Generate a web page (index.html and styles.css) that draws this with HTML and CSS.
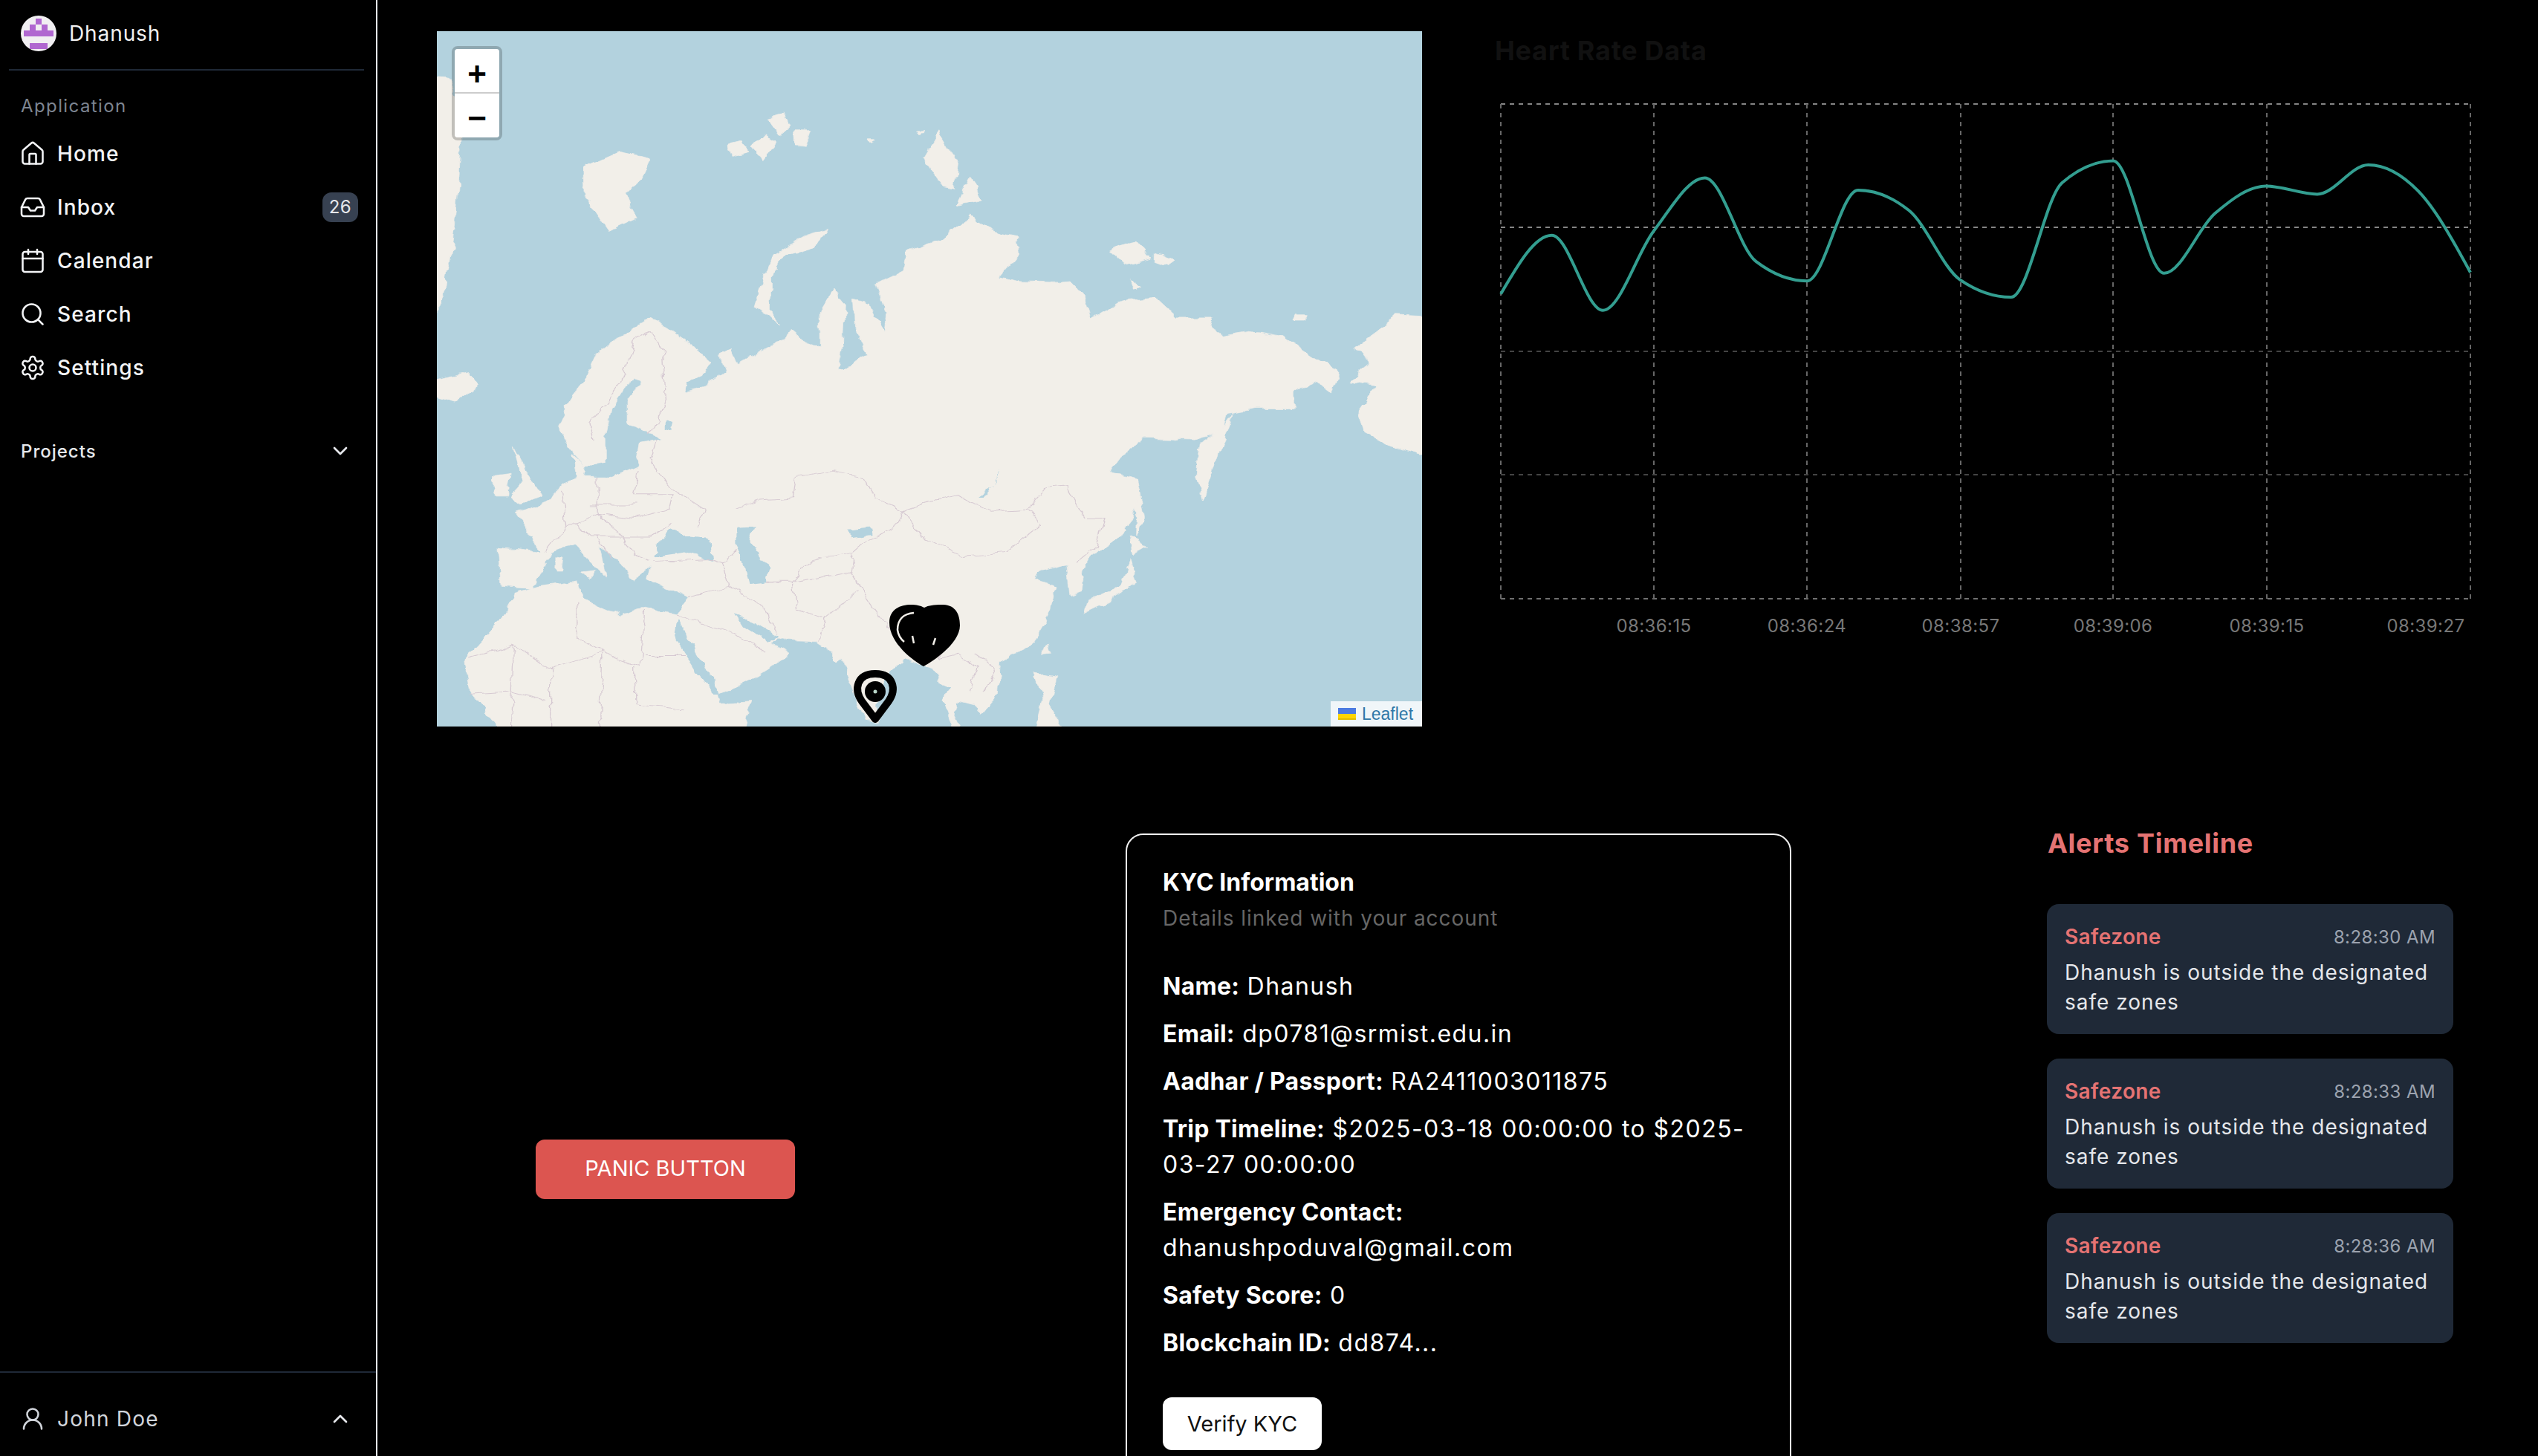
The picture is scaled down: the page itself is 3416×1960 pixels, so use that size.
FILE: index.html
```html
<!DOCTYPE html>
<html lang="en">
<head>
    <meta charset="UTF-8">
    <meta name="viewport" content="width=device-width, initial-scale=1.0">
    <title>Dashboard</title>
    <link rel="stylesheet" href="styles.css">
</head>
<body>
    <div class="sidebar">
        <div class="brand">
            <svg class="avatar" viewBox="0 0 48 48">
                <circle cx="24" cy="24" r="24" fill="#f1eff2"/>
                <path d="M20 4h8v8h8v8h8v8H4v-8h8v-8h8z" fill="#b067d0"/>
                <rect x="20" y="12" width="8" height="8" fill="#f1eff2"/>
                <rect x="12" y="37" width="24" height="8" fill="#b067d0"/>
            </svg>
            <span>Dhanush</span>
        </div>

        <div class="nav-label">Application</div>
        <a class="nav-item">
            <svg class="icon" viewBox="0 0 24 24"><path d="M15 21v-8a1 1 0 0 0-1-1h-4a1 1 0 0 0-1 1v8"/><path d="M3 10a2 2 0 0 1 .709-1.528l7-5.999a2 2 0 0 1 2.582 0l7 5.999A2 2 0 0 1 21 10v9a2 2 0 0 1-2 2H5a2 2 0 0 1-2-2z"/></svg>
            <span>Home</span>
        </a>
        <a class="nav-item">
            <svg class="icon" viewBox="0 0 24 24"><polyline points="22 12 16 12 14 15 10 15 8 12 2 12"/><path d="M5.45 5.11 2 12v6a2 2 0 0 0 2 2h16a2 2 0 0 0 2-2v-6l-3.45-6.89A2 2 0 0 0 16.76 4H7.24a2 2 0 0 0-1.79 1.11z"/></svg>
            <span>Inbox</span>
            <span class="badge">26</span>
        </a>
        <a class="nav-item">
            <svg class="icon" viewBox="0 0 24 24"><path d="M8 2v4"/><path d="M16 2v4"/><rect width="18" height="18" x="3" y="4" rx="2"/><path d="M3 10h18"/></svg>
            <span>Calendar</span>
        </a>
        <a class="nav-item">
            <svg class="icon" viewBox="0 0 24 24"><circle cx="11" cy="11" r="8"/><path d="m21 21-4.3-4.3"/></svg>
            <span>Search</span>
        </a>
        <a class="nav-item">
            <svg class="icon" viewBox="0 0 24 24"><path d="M12.22 2h-.44a2 2 0 0 0-2 2v.18a2 2 0 0 1-1 1.73l-.43.25a2 2 0 0 1-2 0l-.15-.08a2 2 0 0 0-2.73.73l-.22.38a2 2 0 0 0 .73 2.73l.15.1a2 2 0 0 1 1 1.72v.51a2 2 0 0 1-1 1.74l-.15.09a2 2 0 0 0-.73 2.73l.22.38a2 2 0 0 0 2.73.73l.15-.08a2 2 0 0 1 2 0l.43.25a2 2 0 0 1 1 1.73V20a2 2 0 0 0 2 2h.44a2 2 0 0 0 2-2v-.18a2 2 0 0 1 1-1.73l.43-.25a2 2 0 0 1 2 0l.15.08a2 2 0 0 0 2.73-.73l.22-.39a2 2 0 0 0-.73-2.73l-.15-.08a2 2 0 0 1-1-1.74v-.5a2 2 0 0 1 1-1.74l.15-.09a2 2 0 0 0 .73-2.73l-.22-.38a2 2 0 0 0-2.73-.73l-.15.08a2 2 0 0 1-2 0l-.43-.25a2 2 0 0 1-1-1.73V4a2 2 0 0 0-2-2z"/><circle cx="12" cy="12" r="3"/></svg>
            <span>Settings</span>
        </a>

        <div class="projects">
            <span>Projects</span>
            <svg class="chevron" viewBox="0 0 24 24"><path d="m6 9 6 6 6-6"/></svg>
        </div>

        <div class="user-row">
            <svg class="icon" viewBox="0 0 24 24"><circle cx="12" cy="8" r="5"/><path d="M20 21a8 8 0 0 0-16 0"/></svg>
            <span>John Doe</span>
            <svg class="chevron" viewBox="0 0 24 24"><path d="m18 15-6-6-6 6"/></svg>
        </div>
    </div>

    <div class="main">
        <div class="top-row">
            <div class="map">
                <svg class="map-base" viewBox="9 20 1552 1528" preserveAspectRatio="none">
                    <defs>
                        <!-- roughens the traced coastlines -->
                        <filter id="coast" filterUnits="userSpaceOnUse" x="-20" y="-20" width="1620" height="1620">
                            <feTurbulence type="fractalNoise" baseFrequency="0.035" numOctaves="3" seed="4"/>
                            <feDisplacementMap in="SourceGraphic" scale="16" xChannelSelector="R" yChannelSelector="G"/>
                        </filter>
                    </defs>
                    <g class="geo">
                    <g class="land">
                        <!-- eurasia and africa -->
                        <polygon points="200,890 215,845 240,790 258,735 300,690 345,650 372,672 415,715 442,748 428,775 405,790 402,812 432,800 462,770 455,728 472,718 482,752 530,712 560,700 565,672 588,700 612,715 612,640 635,585 652,615 650,700 640,765 660,760 685,730 668,680 665,610 690,620 715,680 718,640 702,575 745,545 750,505 800,480 850,425 880,455 920,470 925,510 895,560 930,570 990,572 1010,570 1030,600 1040,655 1095,610 1140,605 1175,650 1225,650 1245,690 1290,680 1340,690 1395,740 1430,770 1420,815 1395,790 1360,810 1360,850 1300,850 1255,860 1248,900 1205,918 1120,915 1090,950 1068,990 1112,1005 1115,1060 1090,1125 1060,1150 1030,1190 1025,1250 1005,1260 1000,1190 960,1205 952,1225 985,1240 975,1300 945,1370 897,1404 893,1475 866,1521 854,1497 835,1490 827,1497 823,1518 840,1570 825,1570 805,1490 815,1464 803,1453 792,1420 776,1412 745,1401 725,1426 702,1480 702,1540 682,1529 655,1431 649,1399 640,1407 624,1374 608,1360 560,1358 545,1350 535,1365 565,1385 535,1420 505,1445 452,1478 455,1495 505,1490 490,1570 118,1570 60,1470 52,1400 105,1320 130,1255 170,1240 230,1228 240,1270 300,1305 335,1285 385,1300 405,1262 340,1225 345,1195 320,1230 300,1190 265,1150 275,1220 225,1150 190,1165 160,1245 110,1240 105,1155 175,1165 135,1080 190,1050 205,1015 230,1000 225,950 245,975 240,1000 285,1000 325,975 330,925 365,915 335,895 310,885 310,830 330,790 315,785 285,850 275,920 275,970 245,975 225,945"/>
                        <!-- islands -->
                        <polygon points="130,930 150,985 175,1040 140,1060 125,1040 145,1010"/>
                        <polygon points="100,995 125,990 120,1040 98,1040"/>
                        <polygon points="-10,790 60,770 75,800 40,835 -10,815"/>
                        <polygon points="238,320 295,285 345,300 330,345 305,380 325,430 280,460 240,380"/>
                        <polygon points="468,270 490,262 498,285 475,295"/>
                        <polygon points="505,275 525,245 545,265 525,305"/>
                        <polygon points="530,215 558,198 568,225 548,250"/>
                        <polygon points="570,240 600,240 590,270 572,268"/>
                        <polygon points="688,258 700,258 695,268"/>
                        <polygon points="768,240 778,240 772,250"/>
                        <polygon points="775,300 800,240 830,310 825,365 805,360"/>
                        <polygon points="828,405 850,340 868,390"/>
                        <polygon points="625,455 610,490 560,510 535,560 535,640 550,665 510,625 520,580 540,510 590,470"/>
                        <polygon points="1070,500 1110,480 1135,520 1095,535"/>
                        <polygon points="1140,510 1170,525 1160,535 1140,525"/>
                        <polygon points="1100,565 1120,585 1105,590"/>
                        <polygon points="1360,640 1380,640 1375,655 1355,655"/>
                        <polygon points="1250,890 1265,860 1240,950 1215,1050 1205,1000 1210,930"/>
                        <polygon points="1112,1005 1125,1090 1110,1130"/>
                        <polygon points="1100,1130 1130,1150 1105,1170"/>
                        <polygon points="1100,1180 1110,1230 1060,1280 1030,1300 1035,1270 1085,1240"/>
                        <polygon points="1590,650 1520,645 1490,680 1455,715 1480,750 1445,790 1490,800 1460,860 1470,900 1510,930 1590,960"/>
                        <polygon points="-10,120 30,130 50,220 45,340 35,480 20,600 -10,700"/>
                        <polygon points="970,1365 975,1390 965,1392"/>
                        <polygon points="950,1430 985,1440 975,1500 1005,1570 950,1570 965,1490"/>
                        <polygon points="195,1175 208,1178 205,1205 195,1205"/>
                        <polygon points="232,1212 258,1208 250,1225"/>
                    </g>
                    <g class="water">
                        <polygon points="355,1150 375,1115 400,1130 440,1135 445,1185 400,1165 350,1175"/>
                        <polygon points="480,1110 510,1108 500,1140 530,1200 530,1230 500,1235 490,1180 480,1150"/>
                        <polygon points="478,1300 505,1320 545,1348 530,1362 505,1338 490,1325"/>
                        <polygon points="385,1310 400,1340 432,1420 455,1478 445,1478 415,1420 382,1345"/>
                        <polygon points="860,1045 885,1020 898,980 890,1010 870,1045"/>
                        <polygon points="655,1115 690,1110 692,1125 660,1132"/>
                        <polygon points="368,875 382,880 378,900 368,895"/>
                    </g>
                    <g class="borders">
                        <polyline points="480,1070 520,1050 570,1045 575,1000 630,985 680,1000 700,1045 745,1075 730,1110 690,1135 665,1165 660,1210"/>
                        <polyline points="745,1075 780,1055 830,1040 880,1075 940,1070 960,1105 905,1165 840,1175 770,1130 745,1075"/>
                        <polyline points="940,1070 970,1020 1000,1015 1030,1090 1060,1090 1050,1150 1015,1190"/>
                        <polyline points="660,1210 680,1250 720,1330 776,1345 800,1400 830,1390 860,1420 850,1470"/>
                        <polyline points="855,1385 890,1420 870,1470"/>
                        <polyline points="660,1210 570,1230 575,1290 620,1310 610,1360"/>
                        <polyline points="620,1310 672,1250"/>
                        <polyline points="460,1190 470,1240 530,1290 545,1345"/>
                        <polyline points="480,1160 460,1190 440,1180 350,1185"/>
                        <polyline points="530,1230 570,1230 600,1180 665,1165"/>
                        <polyline points="385,1300 470,1340 530,1385"/>
                        <polyline points="405,1262 470,1240"/>
                        <polyline points="60,1395 130,1370 190,1420 270,1385 330,1415 335,1290"/>
                        <polyline points="230,1280 230,1350 270,1385 265,1570"/>
                        <polyline points="130,1370 125,1570"/>
                        <polyline points="190,1420 190,1570"/>
                        <polyline points="335,1392 410,1392"/>
                        <polyline points="320,1415 320,1500 400,1510"/>
                        <polyline points="60,1475 120,1470 180,1490"/>
                        <polyline points="345,680 320,700 300,790 250,880 255,920"/>
                        <polyline points="345,680 365,720 370,830 345,905"/>
                        <polyline points="355,915 345,960 375,1020 430,1070 420,1110"/>
                        <polyline points="262,1000 262,1080 320,1090 375,1070 380,1040 320,1040 325,985"/>
                        <polyline points="180,1165 210,1110 205,1030"/>
                        <polyline points="210,1110 262,1080 300,1130 345,1130 380,1100"/>
                        <polyline points="225,1100 250,1130 300,1130 320,1170 345,1185"/>
                        <polyline points="262,1130 285,1180"/>
                        <polyline points="250,1060 320,1060"/>
                    </g>
                    </g>
                </svg>

                <!-- the three pins at their places on the map -->
                <svg class="pins" viewBox="588 42 1326 936">
                    <path class="pin-blob" d="M1243 897 C1230 890 1197 866 1197 838 C1197 820 1212 814 1226 814 C1234 814 1238 815 1244 818 C1250 815 1256 814 1268 814 C1284 814 1292 824 1292 842 C1292 866 1256 890 1243 897 Z"/>
                    <path class="pin-gap" d="M1230 825 C1216 826 1208 834 1208 848 C1209 855 1212 860 1217 864"/>
                    <path class="pin-gap" d="M1259 859 L1256 868 M1228 856 L1230 866"/>
                    <path class="pin-line" d="M1178 968 L1160 944 C1149 928 1153 907 1178 907 C1203 907 1207 928 1196 944 Z"/>
                    <circle class="pin-dot" cx="1178" cy="931" r="14"/>
                    <circle class="pin-center" cx="1178" cy="931" r="2.5"/>
                </svg>

                <div class="zoom-control">
                    <a class="zoom-btn">+</a>
                    <a class="zoom-btn">−</a>
                </div>
                <div class="attribution">
                    <svg class="flag" viewBox="0 0 24 16"><rect width="24" height="8" fill="#4c7be1"/><rect y="8" width="24" height="6" fill="#ffd500"/><rect y="14" width="24" height="2" fill="#e0bc00"/></svg>
                    <span>Leaflet</span>
                </div>
            </div>

            <div class="chart-section">
                <h2>Heart Rate Data</h2>
                <svg class="chart" viewBox="2000 120 1376 760">
                    <g class="grid">
                        <path d="M2020 140H3325M2020 306H3325"/>
                        <path class="grid-low" d="M2020 473H3325M2020 639H3325"/>
                        <path class="grid-end" d="M2020 806H3325"/>
                        <path class="grid-v" d="M2020 140V806M2226 140V806M2432 140V806M2639 140V806M2844 140V806M3051 140V806M3325 140V806"/>
                    </g>
                    <path class="hr-line" d="M2020 395.8C2042.9 356.3 2065.8 316.8 2088.7 316.8C2111.6 316.8 2134.5 417.7 2157.4 417.7C2180.3 417.7 2203.1 340.4 2226 310.7C2248.9 281 2271.8 239.4 2294.7 239.4C2317.6 239.4 2340.5 334.4 2363.4 351.9C2386.3 369.4 2409.2 378.2 2432.1 378.2C2455 378.2 2477.9 255.9 2500.8 255.9C2523.7 255.9 2546.5 265 2569.4 283.3C2592.3 301.6 2615.2 360.9 2638.1 376.6C2661 392.3 2683.9 400.1 2706.8 400.1C2729.7 400.1 2752.6 265.7 2775.5 246C2798.4 226.3 2821.3 216.4 2844.2 216.4C2867.1 216.4 2889.9 367.8 2912.8 367.8C2935.7 367.8 2958.6 306.7 2981.5 287.1C3004.4 267.5 3027.3 250.4 3050.2 250.4C3073.1 250.4 3096 261.4 3118.9 261.4C3141.8 261.4 3164.7 221.9 3187.6 221.9C3210.5 221.9 3233.3 234.5 3256.2 258.6C3279.1 282.7 3302.1 324.7 3325 366.7"/>
                    <g class="ticks">
                        <text x="2226" y="851">08:36:15</text>
                        <text x="2432" y="851">08:36:24</text>
                        <text x="2639" y="851">08:38:57</text>
                        <text x="2844" y="851">08:39:06</text>
                        <text x="3051" y="851">08:39:15</text>
                        <text x="3265" y="851">08:39:27</text>
                    </g>
                </svg>
            </div>
        </div>

        <div class="bottom-row">
            <div class="panic-col">
                <button class="panic">PANIC BUTTON</button>
            </div>

            <div class="kyc-card">
                <h3>KYC Information</h3>
                <p class="kyc-sub">Details linked with your account</p>
                <div class="kyc-rows">
                    <p><b>Name:</b> Dhanush</p>
                    <p><b>Email:</b> dp0781@srmist.edu.in</p>
                    <p><b>Aadhar / Passport:</b> RA2411003011875</p>
                    <p><b>Trip Timeline:</b> $2025-03-18 00:00:00 to $2025-03-27 00:00:00</p>
                    <p><b>Emergency Contact:</b> dhanushpoduval@gmail.com</p>
                    <p><b>Safety Score:</b> 0</p>
                    <p><b>Blockchain ID:</b> dd874...</p>
                </div>
                <button class="verify">Verify KYC</button>
            </div>

            <div class="alerts">
                <h2>Alerts Timeline</h2>
                <div class="alert">
                    <div class="alert-head"><span class="alert-type">Safezone</span><span class="alert-time">8:28:30 AM</span></div>
                    <p>Dhanush is outside the designated safe zones</p>
                </div>
                <div class="alert">
                    <div class="alert-head"><span class="alert-type">Safezone</span><span class="alert-time">8:28:33 AM</span></div>
                    <p>Dhanush is outside the designated safe zones</p>
                </div>
                <div class="alert">
                    <div class="alert-head"><span class="alert-type">Safezone</span><span class="alert-time">8:28:36 AM</span></div>
                    <p>Dhanush is outside the designated safe zones</p>
                </div>
            </div>
        </div>
    </div>
</body>
</html>
```

FILE: styles.css
```css
html, body {
    height: 100%;
    overflow: hidden;
}
body {
    margin: 0;
    display: flex;
    background-color: #000;
    color: #fff;
    font-family: Inter, "Liberation Sans", sans-serif;
}
p, h2, h3 {
    margin: 0;
}

/* sidebar */
.sidebar {
    width: 508px;
    flex: none;
    box-sizing: border-box;
    border-right: 2px solid #e5e7eb;
    display: flex;
    flex-direction: column;
}
.brand {
    display: flex;
    align-items: center;
    gap: 17px;
    height: 95px;
    box-sizing: border-box;
    margin: 0 16px 0 12px;
    padding: 0 0 3px 16px;
    border-bottom: 2px solid #1f2937;
    font-size: 28px;
    letter-spacing: 0.9px;
    color: #f1f1f1;
}
.avatar {
    width: 48px;
    height: 48px;
}
.nav-label {
    margin: 28px 0 8px 28px;
    height: 40px;
    line-height: 40px;
    font-size: 24px;
    letter-spacing: 1.4px;
    color: #7d8592;
}
.nav-item {
    display: flex;
    align-items: center;
    gap: 15px;
    height: 72px;
    padding: 0 24px 0 26px;
    font-size: 28px;
    font-weight: 500;
    letter-spacing: 1.1px;
    color: #f3f4f6;
}
.icon {
    width: 36px;
    height: 36px;
    flex: none;
    fill: none;
    stroke: currentColor;
    stroke-width: 1.7;
    stroke-linecap: round;
    stroke-linejoin: round;
}
.chevron {
    width: 32px;
    height: 32px;
    margin-left: auto;
    fill: none;
    stroke: #e5e7eb;
    stroke-width: 2;
    stroke-linecap: round;
    stroke-linejoin: round;
}
.badge {
    margin-left: auto;
    width: 48px;
    height: 40px;
    line-height: 40px;
    text-align: center;
    border-radius: 12px;
    background-color: #374151;
    font-size: 24px;
    font-weight: 400;
    letter-spacing: 0.6px;
    color: #e5e7eb;
}
.projects {
    display: flex;
    align-items: center;
    margin-top: 40px;
    height: 72px;
    padding: 0 32px 0 28px;
    font-size: 24px;
    font-weight: 500;
    letter-spacing: 1px;
    color: #e5e7eb;
}
.user-row {
    margin-top: auto;
    display: flex;
    align-items: center;
    gap: 15px;
    height: 114px;
    box-sizing: border-box;
    padding: 12px 32px 0 26px;
    border-top: 2px solid #1f2937;
    font-size: 28px;
    letter-spacing: 1.2px;
    color: #d1d5db;
}

/* main */
.main {
    flex: 1;
    min-width: 0;
    padding: 42px 0 0 80px;
}
.top-row {
    display: flex;
    gap: 98px;
    height: 936px;
}

/* map */
.map {
    position: relative;
    width: 1326px;
    height: 936px;
    flex: none;
    overflow: hidden;
    background-color: #b3d2de;
}
.map-base, .pins {
    position: absolute;
    left: 0;
    top: 0;
    width: 100%;
    height: 100%;
}
.geo {
    filter: url(#coast);
}
.land {
    fill: #f2efe9;
    stroke: #f2efe9;
    stroke-width: 1;
    stroke-linejoin: round;
}
.water {
    fill: #b3d2de;
}
.borders {
    fill: none;
    stroke: #d6c9d2;
    stroke-width: 1.5;
}
.pin-blob {
    fill: #000;
}
.pin-gap {
    fill: none;
    stroke: #f2efe9;
    stroke-width: 2.5;
}
.pin-line {
    fill: none;
    stroke: #000;
    stroke-width: 10;
    stroke-linejoin: round;
}
.pin-dot {
    fill: #000;
}
.pin-center {
    fill: #b9d6c8;
}
.zoom-control {
    position: absolute;
    left: 20px;
    top: 20px;
    border: 4px solid rgba(0, 0, 0, 0.2);
    border-radius: 8px;
    background-clip: padding-box;
}
.zoom-btn {
    display: block;
    width: 60px;
    height: 60px;
    text-align: center;
    background-color: #fff;
    color: #000;
    font-family: "Liberation Sans", sans-serif;
    font-size: 44px;
    font-weight: 700;
}
.zoom-btn:first-child {
    height: 58px;
    line-height: 68px;
    border-bottom: 2px solid #ccc;
    border-radius: 4px 4px 0 0;
}
.zoom-btn:last-child {
    height: 59px;
    line-height: 66px;
    border-radius: 0 0 4px 4px;
}
.attribution {
    position: absolute;
    right: 0;
    bottom: 0;
    display: flex;
    align-items: center;
    gap: 8px;
    width: 123px;
    height: 34px;
    box-sizing: border-box;
    padding-left: 10px;
    background-color: rgba(255, 255, 255, 0.8);
    font-family: "Liberation Sans", sans-serif;
    font-size: 23px;
    color: #2f78a8;
}
.flag {
    width: 24px;
    height: 16px;
    flex: none;
}

/* chart */
.chart-section {
    flex: 1;
}
.chart-section h2 {
    height: 52px;
    line-height: 52px;
    font-size: 36px;
    font-weight: 700;
    letter-spacing: 0.7px;
    color: #111;
}
.chart {
    display: block;
    width: 1376px;
    height: 760px;
    margin: 26px 0 0 -12px;
}
.grid path {
    fill: none;
    stroke: #858585;
    stroke-width: 2;
    stroke-dasharray: 6 6;
}
.grid .grid-low {
    stroke: #444;
}
.grid .grid-end {
    stroke: #707070;
}
.grid .grid-v {
    stroke: #666;
}
.hr-line {
    fill: none;
    stroke: #339e90;
    stroke-width: 4;
}
.ticks text {
    fill: #777;
    font-size: 24px;
    letter-spacing: 0.4px;
    text-anchor: middle;
}

/* bottom */
.bottom-row {
    display: grid;
    grid-template-columns: 927px 1240px 547px;
    margin-top: 144px;
}
.panic-col {
    display: flex;
    align-items: center;
    height: 904px;
    padding-left: 133px;
}
.panic {
    width: 349px;
    height: 80px;
    padding-bottom: 4px;
    border: none;
    border-radius: 12px;
    background-color: #dc5550;
    color: #fff;
    font-family: inherit;
    font-size: 29px;
}
.kyc-card {
    width: 896px;
    height: 904px;
    box-sizing: border-box;
    padding: 40px 48px 0;
    border: 2px solid #f0f0f0;
    border-radius: 24px;
}
.kyc-card h3 {
    height: 48px;
    line-height: 48px;
    font-size: 32px;
    font-weight: 700;
}
.kyc-sub {
    height: 48px;
    line-height: 48px;
    font-size: 28px;
    color: #666;
    letter-spacing: 0.95px;
}
.kyc-rows {
    margin-top: 44px;
    display: flex;
    flex-direction: column;
    gap: 16px;
    font-size: 32px;
    line-height: 48px;
    letter-spacing: 1.45px;
}
.kyc-rows b {
    font-weight: 700;
    letter-spacing: 0.25px;
}
.verify {
    display: block;
    margin-top: 49px;
    width: 214px;
    height: 71px;
    border: none;
    border-radius: 12px;
    background-color: #fff;
    color: #111;
    font-family: inherit;
    font-size: 29px;
}
.alerts h2 {
    height: 48px;
    line-height: 48px;
    margin: -11px 0 58px 1px;
    font-size: 36px;
    font-weight: 700;
    letter-spacing: 0.7px;
    color: #e57373;
}
.alert {
    height: 175px;
    box-sizing: border-box;
    margin-bottom: 33px;
    padding: 24px 24px 0;
    border-radius: 16px;
    background-color: #1f2937;
}
.alert-head {
    display: flex;
    justify-content: space-between;
    align-items: center;
    height: 40px;
}
.alert-type {
    font-size: 28px;
    font-weight: 600;
    letter-spacing: 0.4px;
    color: #e57373;
}
.alert-time {
    font-size: 24px;
    letter-spacing: 0.4px;
    color: #9ca3af;
}
.alert p {
    margin-top: 8px;
    font-size: 28px;
    line-height: 40px;
    color: #e5e7eb;
    letter-spacing: 1px;
}
```
